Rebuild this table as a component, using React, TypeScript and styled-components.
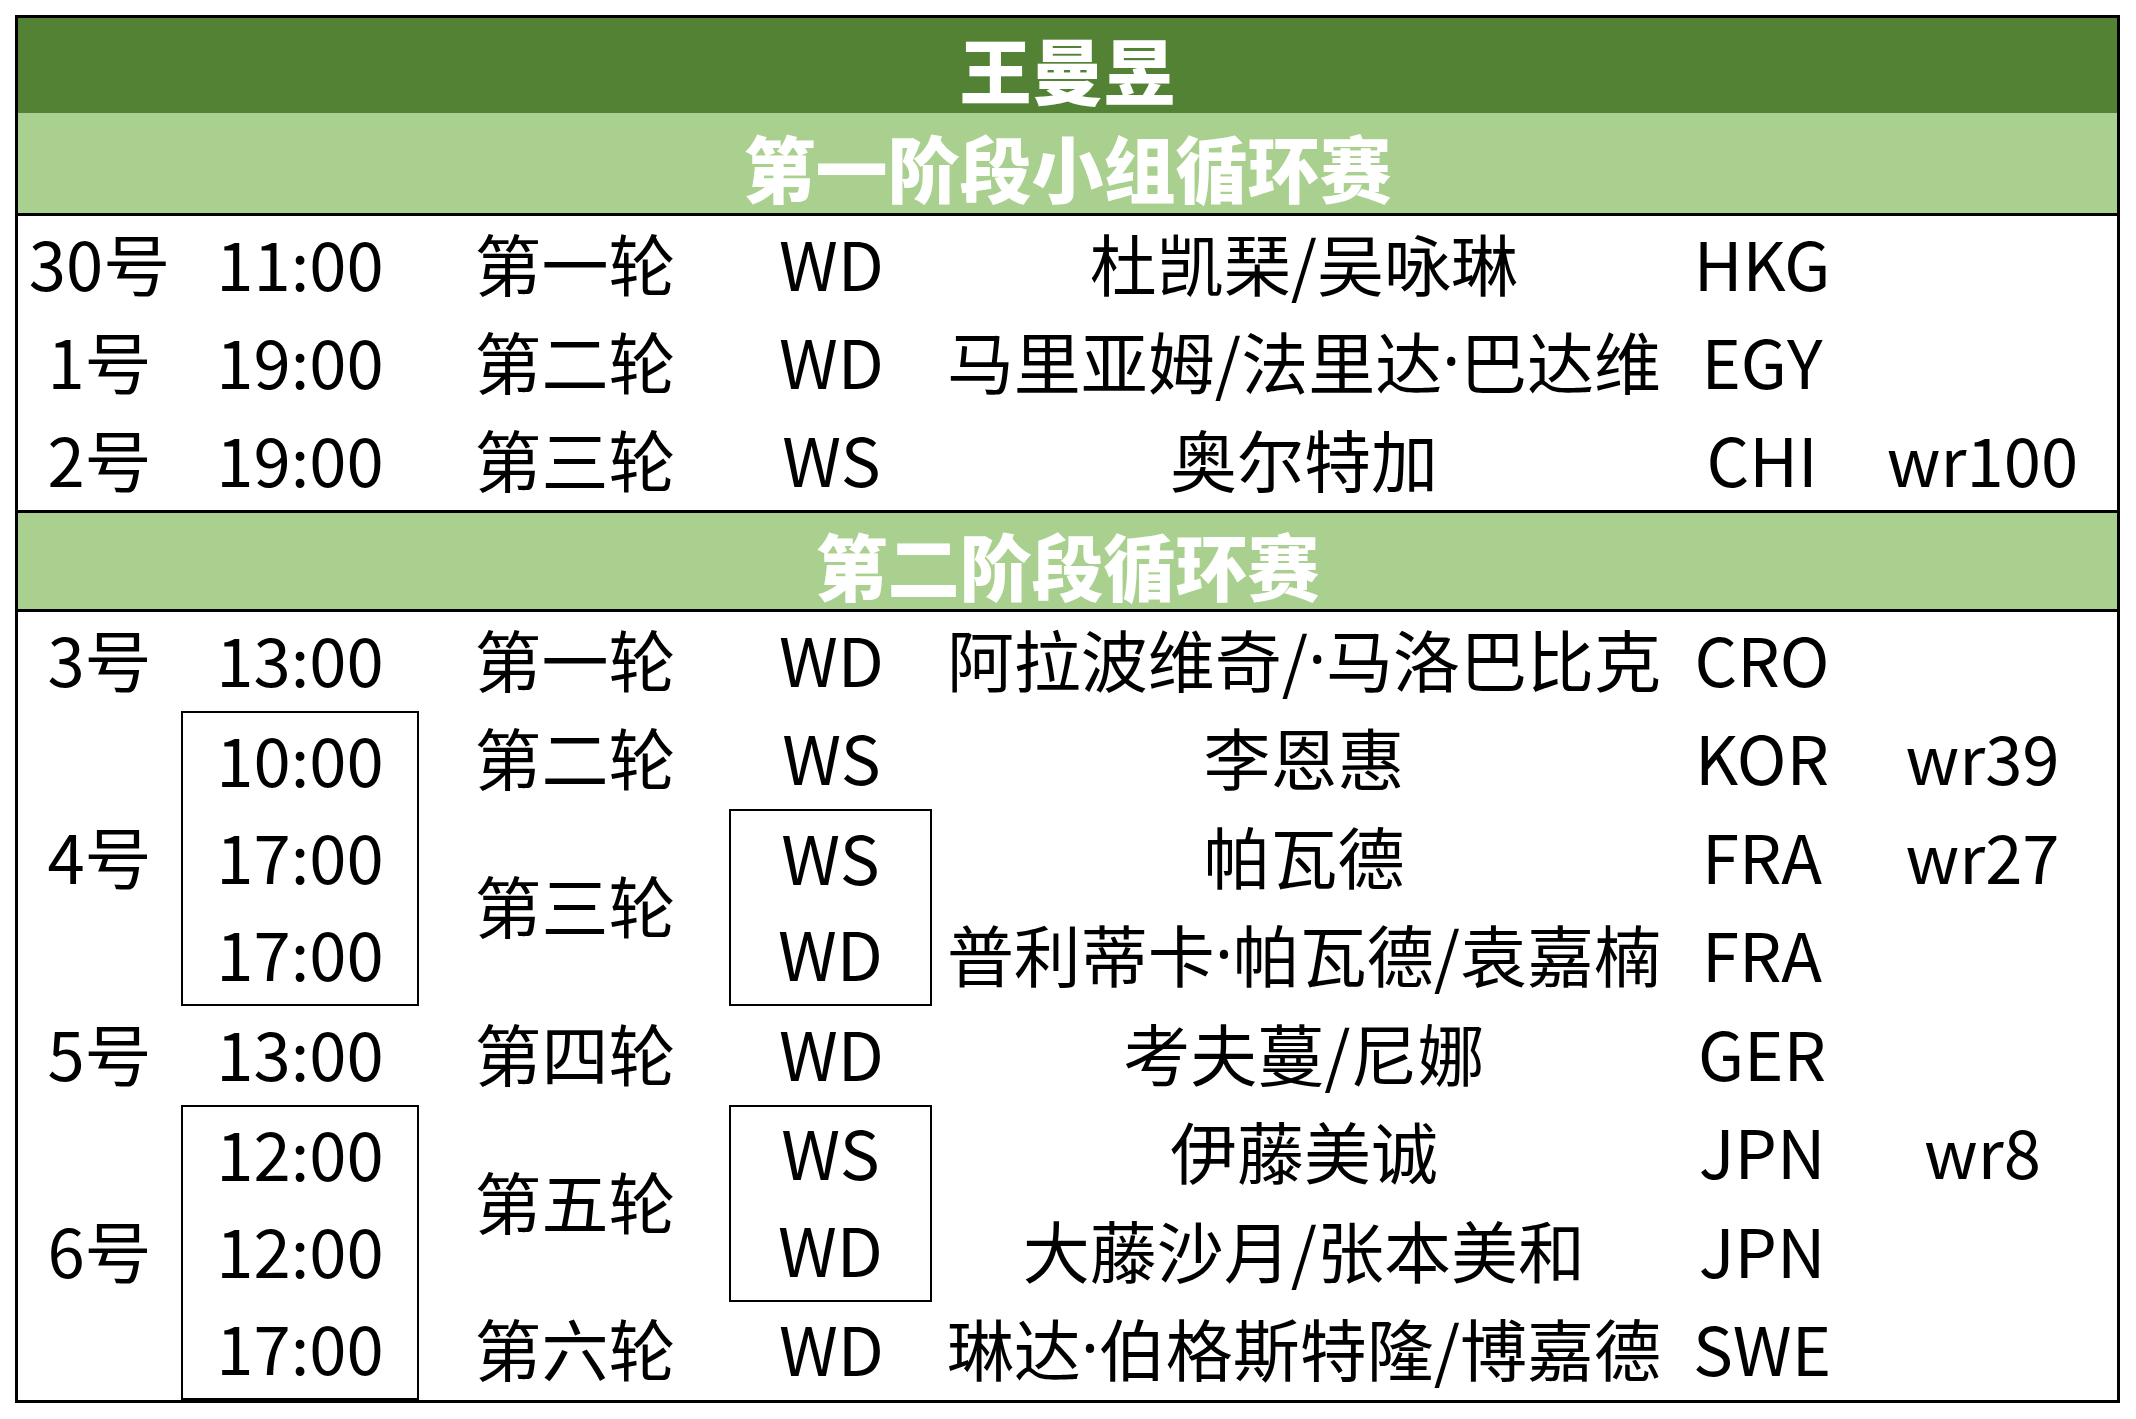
import { Fragment } from "react";
import styled, { createGlobalStyle } from "styled-components";

const GlobalStyle = createGlobalStyle`
  html, body {
    margin: 0;
    padding: 0;
    background: #ffffff;
  }
  body {
    font-family: "Noto Sans CJK SC", "Noto Sans", sans-serif;
    color: #000000;
  }
`;

const COLS = "163px 238px 312px 201px 744px 172px 269px";

const Page = styled.div`
  padding: 15px 16px 15px 15px;
`;

const Table = styled.div`
  width: 2105px;
  box-sizing: border-box;
  border: 3px solid #000;
`;

const TitleBar = styled.div`
  height: 95px;
  background: #548235;
  color: #ffffff;
  font-size: 72px;
  font-weight: 900;
  display: flex;
  align-items: center;
  justify-content: center;
  line-height: 1;
  padding-top: 4px;
  box-sizing: border-box;
`;

const SectionHead = styled.div<{ $h: number }>`
  height: ${p => p.$h}px;
  background: #a9d08e;
  color: #ffffff;
  font-size: 72px;
  font-weight: 900;
  display: flex;
  align-items: center;
  justify-content: center;
  line-height: 1;
  padding-top: 6px;
  box-sizing: border-box;
  border-bottom: 3px solid #000;
`;

const Grid = styled.div<{ $rows: number; $rowH: number; $line?: boolean }>`
  display: grid;
  grid-template-columns: ${COLS};
  grid-template-rows: repeat(${p => p.$rows}, ${p => p.$rowH}px);
  border-bottom: ${p => (p.$line ? "3px solid #000" : "none")};
`;

const Cell = styled.div<{ $col: number; $row: number; $span?: number }>`
  grid-column: ${p => p.$col};
  grid-row: ${p => p.$row} / span ${p => p.$span || 1};
  display: flex;
  align-items: center;
  justify-content: center;
  font-size: 67px;
  line-height: 1;
  padding-bottom: 8px;
  box-sizing: border-box;
  white-space: nowrap;
`;

const Group = styled.div<{ $col: number; $row: number; $span: number }>`
  grid-column: ${p => p.$col};
  grid-row: ${p => p.$row} / span ${p => p.$span};
  display: grid;
  grid-template-rows: repeat(${p => p.$span}, 1fr);
  border: 2px solid #000;
  margin-left: ${p => (p.$col === 4 ? "-2px" : "0")};
`;

const GroupLine = styled.div`
  display: flex;
  align-items: center;
  justify-content: center;
  font-size: 67px;
  line-height: 1;
  padding-bottom: 8px;
  box-sizing: border-box;
  white-space: nowrap;
`;

// the CJK font draws "·" full width; the sheet uses the narrow Latin one
const Dot = styled.span`
  font-family: "Noto Sans", sans-serif;
`;

function Name({ text }: { text: string }) {
  const parts = text.split("·");
  return (
    <>
      {parts.map((part, i) => (
        <Fragment key={`p-${i}`}>
          {i > 0 && <Dot>·</Dot>}
          {part}
        </Fragment>
      ))}
    </>
  );
}

type Row = [string, string, string, string, string, string, string];

const stageOne: Row[] = [
  ["30号", "11:00", "第一轮", "WD", "杜凯琹/吴咏琳", "HKG", ""],
  ["1号", "19:00", "第二轮", "WD", "马里亚姆/法里达·巴达维", "EGY", ""],
  ["2号", "19:00", "第三轮", "WS", "奥尔特加", "CHI", "wr100"],
];

const names = [
  ["阿拉波维奇/·马洛巴比克", "CRO", ""],
  ["李恩惠", "KOR", "wr39"],
  ["帕瓦德", "FRA", "wr27"],
  ["普利蒂卡·帕瓦德/袁嘉楠", "FRA", ""],
  ["考夫蔓/尼娜", "GER", ""],
  ["伊藤美诚", "JPN", "wr8"],
  ["大藤沙月/张本美和", "JPN", ""],
  ["琳达·伯格斯特隆/博嘉德", "SWE", ""],
];

export default function App() {
  return (
    <Page>
      <GlobalStyle />
      <Table>
        <TitleBar>王曼昱</TitleBar>
        <SectionHead $h={103}>第一阶段小组循环赛</SectionHead>
        <Grid $rows={3} $rowH={98} $line>
          {stageOne.map((row, r) =>
            row.map((text, c) => (
              <Cell key={`s1-${r}-${c}`} $col={c + 1} $row={r + 1}>
                <Name text={text} />
              </Cell>
            ))
          )}
        </Grid>
        <SectionHead $h={99}>第二阶段循环赛</SectionHead>
        <Grid $rows={8} $rowH={98.5}>
          {/* 日期 */}
          <Cell $col={1} $row={1}>3号</Cell>
          <Cell $col={1} $row={2} $span={3}>4号</Cell>
          <Cell $col={1} $row={5}>5号</Cell>
          <Cell $col={1} $row={6} $span={3}>6号</Cell>

          {/* 时间 */}
          <Cell $col={2} $row={1}>13:00</Cell>
          <Group $col={2} $row={2} $span={3}>
            <GroupLine>10:00</GroupLine>
            <GroupLine>17:00</GroupLine>
            <GroupLine>17:00</GroupLine>
          </Group>
          <Cell $col={2} $row={5}>13:00</Cell>
          <Group $col={2} $row={6} $span={3}>
            <GroupLine>12:00</GroupLine>
            <GroupLine>12:00</GroupLine>
            <GroupLine>17:00</GroupLine>
          </Group>

          {/* 轮次 */}
          <Cell $col={3} $row={1}>第一轮</Cell>
          <Cell $col={3} $row={2}>第二轮</Cell>
          <Cell $col={3} $row={3} $span={2}>第三轮</Cell>
          <Cell $col={3} $row={5}>第四轮</Cell>
          <Cell $col={3} $row={6} $span={2}>第五轮</Cell>
          <Cell $col={3} $row={8}>第六轮</Cell>

          {/* 项目 */}
          <Cell $col={4} $row={1}>WD</Cell>
          <Cell $col={4} $row={2}>WS</Cell>
          <Group $col={4} $row={3} $span={2}>
            <GroupLine>WS</GroupLine>
            <GroupLine>WD</GroupLine>
          </Group>
          <Cell $col={4} $row={5}>WD</Cell>
          <Group $col={4} $row={6} $span={2}>
            <GroupLine>WS</GroupLine>
            <GroupLine>WD</GroupLine>
          </Group>
          <Cell $col={4} $row={8}>WD</Cell>

          {names.map(([name, country, rank], i) => (
            <Fragment key={`r-${i}`}>
              <Cell $col={5} $row={i + 1}><Name text={name} /></Cell>
              <Cell $col={6} $row={i + 1}>{country}</Cell>
              <Cell $col={7} $row={i + 1}>{rank}</Cell>
            </Fragment>
          ))}
        </Grid>
      </Table>
    </Page>
  );
}
